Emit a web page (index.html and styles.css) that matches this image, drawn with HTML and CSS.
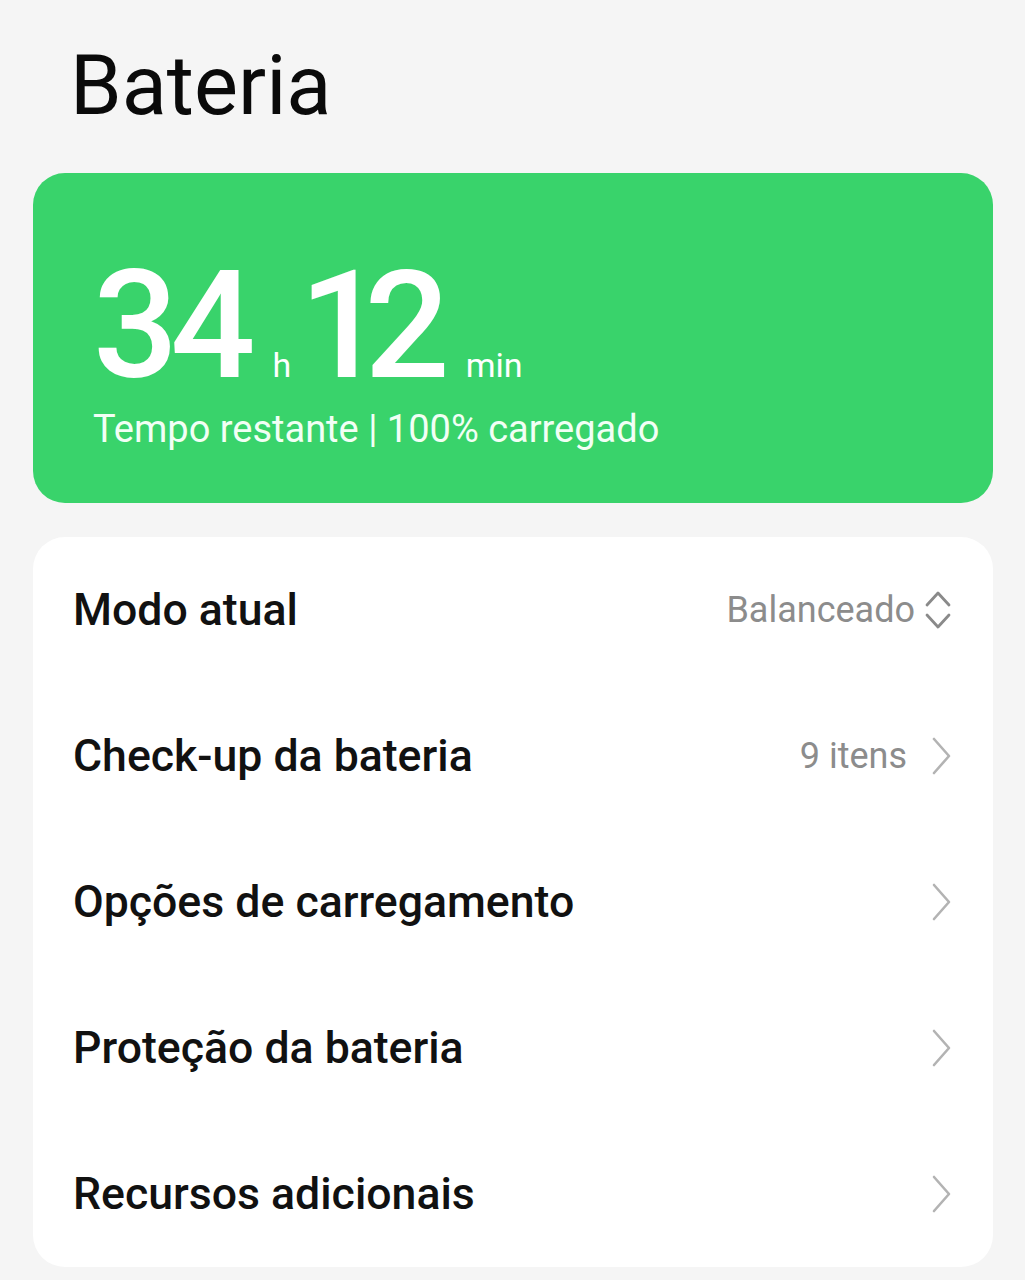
FILE: index.html
```html
<!DOCTYPE html>
<html lang="pt">
<head>
<meta charset="utf-8">
<title>Bateria</title>
<link rel="stylesheet" href="styles.css">
</head>
<body>
<div class="page">
  <h1 class="title">Bateria</h1>
  <section class="hero">
    <div class="time">
      <span class="num">34</span><span class="unit unit-h">h</span><span class="num num-tight">12</span><span class="unit unit-min">min</span>
    </div>
    <div class="sub">Tempo restante | 100% carregado</div>
  </section>
  <section class="list">
    <div class="row">
      <span class="label">Modo atual</span>
      <span class="value">Balanceado</span>
      <svg class="updown" width="26" height="44" viewBox="0 0 26 44"><path d="M2 17 L13 5 L24 17 M2 27 L13 39 L24 27" fill="none" stroke="#8a8a8a" stroke-width="2.8" stroke-linecap="round" stroke-linejoin="round"/></svg>
    </div>
    <div class="row">
      <span class="label">Check-up da bateria</span>
      <span class="value value-gap">9 itens</span>
      <svg class="chev" width="20" height="38" viewBox="0 0 20 38"><path d="M3 2 L18 19 L3 36" fill="none" stroke="#b3b3b3" stroke-width="2.6" stroke-linecap="round" stroke-linejoin="round"/></svg>
    </div>
    <div class="row">
      <span class="label">Opções de carregamento</span>
      <svg class="chev" width="20" height="38" viewBox="0 0 20 38"><path d="M3 2 L18 19 L3 36" fill="none" stroke="#b3b3b3" stroke-width="2.6" stroke-linecap="round" stroke-linejoin="round"/></svg>
    </div>
    <div class="row">
      <span class="label">Proteção da bateria</span>
      <svg class="chev" width="20" height="38" viewBox="0 0 20 38"><path d="M3 2 L18 19 L3 36" fill="none" stroke="#b3b3b3" stroke-width="2.6" stroke-linecap="round" stroke-linejoin="round"/></svg>
    </div>
    <div class="row">
      <span class="label">Recursos adicionais</span>
      <svg class="chev" width="20" height="38" viewBox="0 0 20 38"><path d="M3 2 L18 19 L3 36" fill="none" stroke="#b3b3b3" stroke-width="2.6" stroke-linecap="round" stroke-linejoin="round"/></svg>
    </div>
  </section>
</div>
</body>
</html>
```

FILE: styles.css
```css
html, body {
  margin: 0;
  padding: 0;
  background: #f5f5f5;
  font-family: Roboto, "Noto Sans", sans-serif;
}

.page {
  width: 1025px;
  height: 1280px;
  padding: 44px 32px 0 33px;
  box-sizing: border-box;
  overflow: hidden;
}

.title {
  margin: 0 0 46px 37px;
  font-size: 83px;
  line-height: 1;
  font-weight: 400;
  color: #0a0a0a;
}

.hero {
  background: #39d36b;
  border-radius: 32px;
  height: 330px;
  box-sizing: border-box;
  padding: 78px 40px 0 60px;
  color: #ffffff;
}

.time {
  display: flex;
  align-items: baseline;
  line-height: 1;
}

.num {
  font-size: 150px;
  font-weight: 500;
  letter-spacing: -8px;
}

.num-tight {
  letter-spacing: -20px;
}

.unit {
  font-size: 34px;
  font-weight: 400;
}

.unit-h {
  margin: 0 8px 0 25px;
}

.unit-min {
  margin-left: 36px;
}

.sub {
  margin-top: 9px;
  font-size: 38px;
  line-height: 1;
  font-weight: 400;
  color: #f2fff5;
}

.list {
  margin-top: 34px;
  background: #ffffff;
  border-radius: 32px;
}

.row {
  height: 146px;
  display: flex;
  align-items: center;
  padding: 0 42px 0 40px;
}

.label {
  flex: 1;
  font-size: 44.6px;
  font-weight: 500;
  color: #111111;
}

.value {
  font-size: 36px;
  color: #8c8c8c;
  margin-right: 10px;
}

.value-gap {
  margin-right: 24px;
}

.updown {
  display: block;
}

.chev {
  display: block;
}
```
